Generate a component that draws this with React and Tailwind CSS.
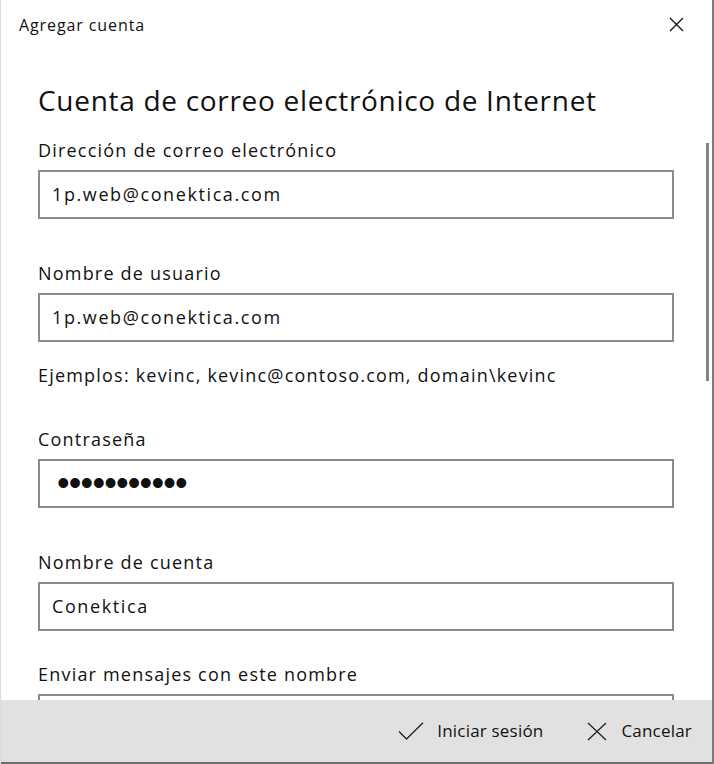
function Label({ children, className = "" }) {
  return (
    <div className={"text-[18px] leading-[22px] tracking-[1.2px] text-[#111] whitespace-nowrap " + className}>
      {children}
    </div>
  );
}

function Box({ children }) {
  return (
    <div className="mt-[9px] h-[49px] shrink-0 border-2 border-[#8a8a8a] bg-white flex items-center pl-[12px] text-[18px] tracking-[1.6px] text-[#111] overflow-hidden whitespace-nowrap">
      {children}
    </div>
  );
}

export default function App() {
  return (
    <div className="w-[714px] h-[764px] flex flex-col bg-white border-l border-l-[#dcdcdc] border-r-2 border-r-[#7b7b7b] font-['Open_Sans',sans-serif] text-black overflow-hidden">
      <header className="h-[48px] shrink-0 flex items-start justify-between pl-[18px] pr-[28px] pt-[15px]">
        <span className="text-[16px] leading-[20px] tracking-[0.9px] text-[#111]">Agregar cuenta</span>
        <svg className="mt-[2px]" width="15" height="15" viewBox="0 0 15 15">
          <path d="M1 1L14 14M14 1L1 14" stroke="#111" strokeWidth="1.3" fill="none" />
        </svg>
      </header>

      <main className="flex-1 relative overflow-hidden pl-[37px] pr-[38px] flex flex-col">
        <h1 className="mt-[34px] text-[28px] leading-[36px] tracking-[0.7px] font-normal text-[#111] whitespace-nowrap">
          Cuenta de correo electrónico de Internet
        </h1>

        <Label className="mt-[21px]">Dirección de correo electrónico</Label>
        <Box>1p.web@conektica.com</Box>

        <Label className="mt-[43px]">Nombre de usuario</Label>
        <Box>1p.web@conektica.com</Box>

        <Label className="mt-[22px]">Ejemplos: kevinc, kevinc@contoso.com, domain\kevinc</Label>

        <Label className="mt-[42px]">Contraseña</Label>
        <Box>
          <span className="font-['Liberation_Sans',sans-serif] text-[36px] leading-none tracking-[-0.8px] mt-[-2px] ml-[5px]">
            •••••••••••
          </span>
        </Box>

        <Label className="mt-[43px]">Nombre de cuenta</Label>
        <Box>Conektica</Box>

        <Label className="mt-[32px]">Enviar mensajes con este nombre</Label>
        <Box></Box>

        <div className="absolute right-[3px] top-[95px] w-[3px] h-[238px] bg-[#858585]" />
      </main>

      <footer className="h-[64px] shrink-0 bg-[#e1e1e1] border-b-2 border-b-[#6e6e6e] flex items-center justify-end pr-[20px] text-[17px] tracking-[0.2px] text-[#111]">
        <div className="flex items-center gap-[13px]">
          <svg width="26" height="18" viewBox="0 0 26 18">
            <path d="M1 9.5L8.5 17L25 0.8" stroke="#222" strokeWidth="1.3" fill="none" />
          </svg>
          <span>Iniciar sesión</span>
        </div>
        <div className="flex items-center gap-[14px] ml-[44px]">
          <svg width="20" height="19" viewBox="0 0 20 19">
            <path d="M1 1L19 18M19 1L1 18" stroke="#222" strokeWidth="1.3" fill="none" />
          </svg>
          <span>Cancelar</span>
        </div>
      </footer>
    </div>
  );
}
